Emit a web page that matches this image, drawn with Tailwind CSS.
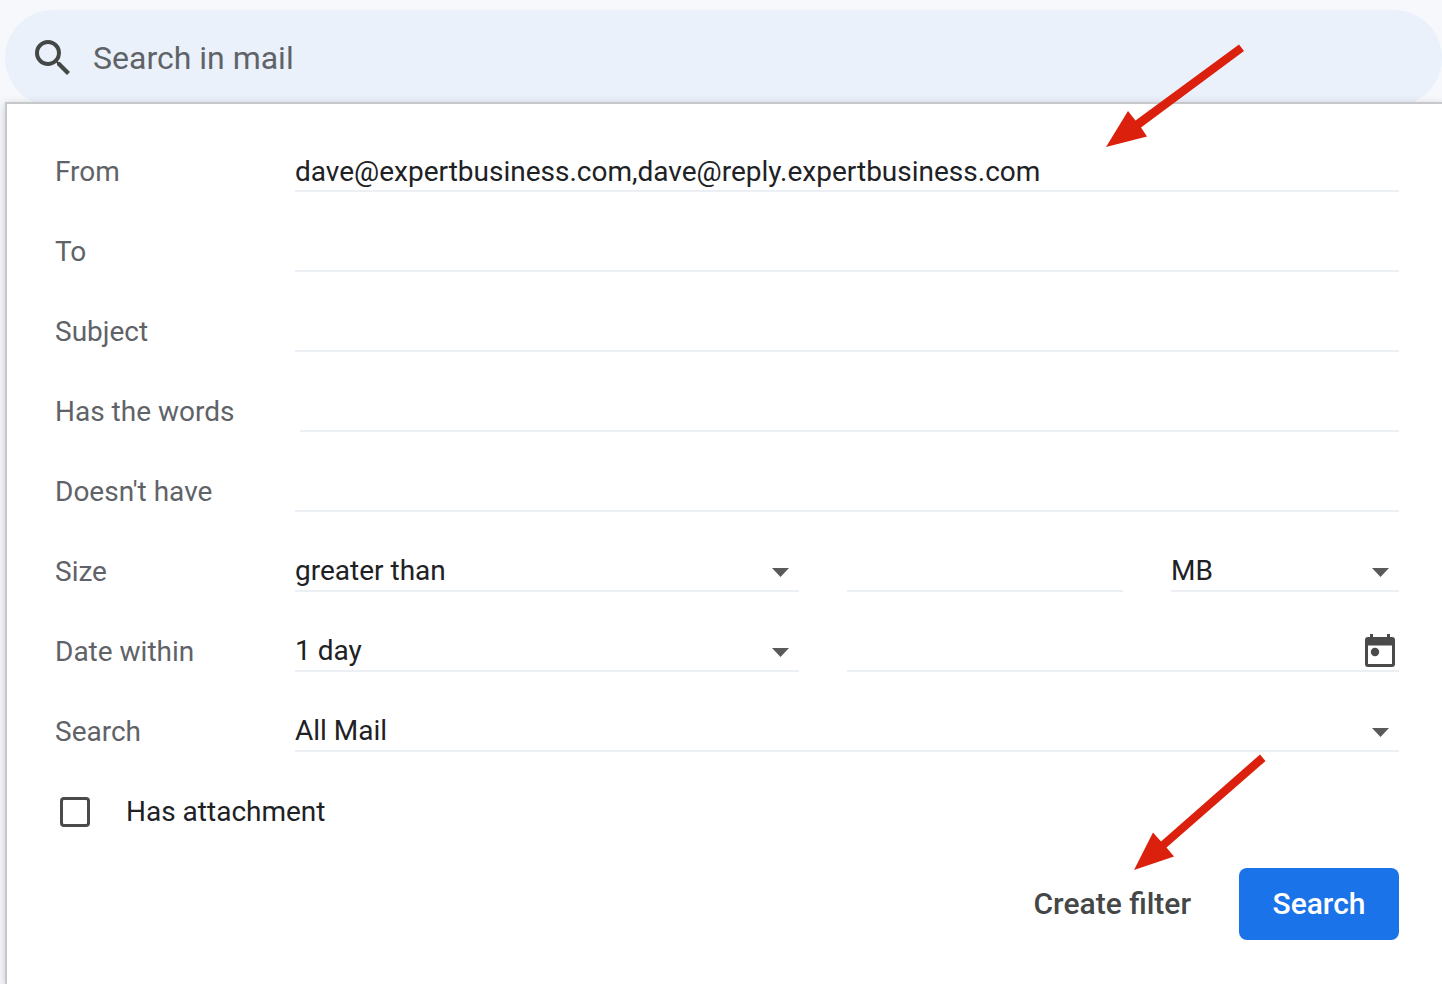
<!DOCTYPE html>
<html lang="en">
<head>
  <meta charset="UTF-8">
  <meta name="viewport" content="width=device-width, initial-scale=1.0">
  <title>Search in mail</title>
  <script src="https://cdn.jsdelivr.net/npm/@tailwindcss/browser@4"></script>
</head>
<body class="min-h-screen flex flex-col overflow-x-hidden bg-[#f6f8fc] pt-[10px] pl-[5px] font-['Roboto','Liberation_Sans',sans-serif] text-[28px] leading-10 text-[#202124]">

  <!-- Search bar -->
  <header class="-mb-1 h-24 flex items-center gap-4 rounded-full bg-[#eaf1fb] pl-6">
    <svg class="size-12 shrink-0 fill-[#444746]" viewBox="0 0 24 24" aria-hidden="true">
      <path d="M15.5 14h-.79l-.28-.27A6.471 6.471 0 0 0 16 9.500 6.500 6.500 0 1 0 9.500 16c1.610 0 3.090-.59 4.230-1.570l.27.28v.79l5 4.990L20.490 19l-4.990-5zm-6 0C7.010 14 5 11.990 5 9.500S7.010 5 9.500 5 14 7.010 14 9.500 11.990 14 9.500 14z"/>
    </svg>
    <input type="search" placeholder="Search in mail" aria-label="Search in mail" class="grow min-w-0 bg-transparent text-[32px] outline-none placeholder:text-[#5f6368]">
  </header>

  <!-- Advanced search panel -->
  <form class="relative grow border-t-2 border-l-2 border-[#c7c8ca] bg-white pt-2 pr-[43px] pb-11 pl-12 shadow-[0_2px_8px_rgba(60,64,67,0.25)]">
    <div class="h-20 flex items-end">
      <label for="from" class="w-60 h-10 shrink-0 text-[#5f6368]">From</label>
      <input id="from" type="text" value="dave@expertbusiness.com,dave@reply.expertbusiness.com" class="grow min-w-0 h-10 border-b-2 border-[#eceff3] pt-0.5 outline-none">
    </div>
    <div class="h-20 flex items-end">
      <label for="to" class="w-60 h-10 shrink-0 text-[#5f6368]">To</label>
      <input id="to" type="text" class="grow min-w-0 h-10 border-b-2 border-[#eceff3] pt-0.5 outline-none">
    </div>
    <div class="h-20 flex items-end">
      <label for="subject" class="w-60 h-10 shrink-0 text-[#5f6368]">Subject</label>
      <input id="subject" type="text" class="grow min-w-0 h-10 border-b-2 border-[#eceff3] pt-0.5 outline-none">
    </div>
    <div class="h-20 flex items-end">
      <label for="has-words" class="w-60 h-10 shrink-0 text-[#5f6368]">Has the words</label>
      <input id="has-words" type="text" class="ml-[5px] grow min-w-0 h-10 border-b-2 border-[#eceff3] pt-0.5 outline-none">
    </div>
    <div class="h-20 flex items-end">
      <label for="no-words" class="w-60 h-10 shrink-0 text-[#5f6368]">Doesn't have</label>
      <input id="no-words" type="text" class="grow min-w-0 h-10 border-b-2 border-[#eceff3] pt-0.5 outline-none">
    </div>

    <div class="h-20 flex items-end">
      <label for="size-op" class="w-60 h-10 shrink-0 text-[#5f6368]">Size</label>
      <div class="grow grid grid-cols-[42fr_23fr_19fr] gap-12">
        <div class="relative">
          <select id="size-op" class="block w-full h-10 appearance-none border-b-2 border-[#eceff3] leading-9 outline-none">
            <option>greater than</option>
            <option>less than</option>
          </select>
          <svg class="pointer-events-none absolute top-4 right-[10px] w-[17px] h-[9px] fill-[#5a5a5a]" viewBox="0 0 17 9"><path d="M0 0h17L8.500 9z"/></svg>
        </div>
        <input type="text" aria-label="Size value" class="min-w-0 h-10 border-b-2 border-[#eceff3] pt-0.5 outline-none">
        <div class="relative">
          <select aria-label="Size unit" class="block w-full h-10 appearance-none border-b-2 border-[#eceff3] leading-9 outline-none">
            <option>MB</option>
            <option>KB</option>
            <option>Bytes</option>
          </select>
          <svg class="pointer-events-none absolute top-4 right-[10px] w-[17px] h-[9px] fill-[#5a5a5a]" viewBox="0 0 17 9"><path d="M0 0h17L8.500 9z"/></svg>
        </div>
      </div>
    </div>

    <div class="h-20 flex items-end">
      <label for="within" class="w-60 h-10 shrink-0 text-[#5f6368]">Date within</label>
      <div class="grow grid grid-cols-[42fr_23fr_19fr] gap-12">
        <div class="relative">
          <select id="within" class="block w-full h-10 appearance-none border-b-2 border-[#eceff3] leading-9 outline-none">
            <option>1 day</option>
            <option>3 days</option>
            <option>1 week</option>
          </select>
          <svg class="pointer-events-none absolute top-4 right-[10px] w-[17px] h-[9px] fill-[#5a5a5a]" viewBox="0 0 17 9"><path d="M0 0h17L8.500 9z"/></svg>
        </div>
        <div class="col-span-2 flex items-start h-10 border-b-2 border-[#eceff3]">
          <input type="text" aria-label="Date" class="grow min-w-0 h-full outline-none">
          <button type="button" aria-label="Choose date" class="mt-0.5 mr-1 shrink-0">
            <svg class="w-[30px] h-[33px]" viewBox="0 0 30 33">
              <path fill="#4a4a4a" fill-rule="evenodd" d="M5 0h3v3h14V0h3v3h2a3 3 0 0 1 3 3v24a3 3 0 0 1-3 3H3a3 3 0 0 1-3-3V6a3 3 0 0 1 3-3h2zM3 11.500V30h24V11.500z"/>
              <circle cx="10" cy="18" r="4.200" fill="#4a4a4a"/>
            </svg>
          </button>
        </div>
      </div>
    </div>

    <div class="h-20 flex items-end">
      <label for="scope" class="w-60 h-10 shrink-0 text-[#5f6368]">Search</label>
      <div class="relative grow">
        <select id="scope" class="block w-full h-10 appearance-none border-b-2 border-[#eceff3] leading-9 outline-none">
          <option>All Mail</option>
          <option>Inbox</option>
          <option>Starred</option>
        </select>
        <svg class="pointer-events-none absolute top-4 right-[10px] w-[17px] h-[9px] fill-[#5a5a5a]" viewBox="0 0 17 9"><path d="M0 0h17L8.500 9z"/></svg>
      </div>
    </div>

    <div class="mt-5 h-20 flex items-center pl-[5px]">
      <input id="attachment" type="checkbox" class="size-[30px] appearance-none rounded-[4px] border-[3px] border-[#4a4a4a] checked:bg-[#4a4a4a]">
      <label for="attachment" class="pl-9">Has attachment</label>
    </div>

    <div class="mt-4 flex justify-end items-center gap-12 text-[30px] font-medium">
      <button type="button" class="h-[72px] text-[#444746]">Create filter</button>
      <button type="submit" class="w-40 h-[72px] rounded-lg bg-[#1a73e8] text-white">Search</button>
    </div>

    <!-- Arrows pointing at the From field and the Create filter button -->
    <svg class="pointer-events-none absolute -top-[60px] right-[198px] w-[138px] h-[103px] fill-[#db200e]" viewBox="0 0 138 103">
      <path d="M133 0.500L138 7L35 83.500L41 92.500L0 103L22 67L29.500 76.500z"/>
    </svg>
    <svg class="pointer-events-none absolute top-[650px] right-[176px] w-[132px] h-[116px] fill-[#db200e]" viewBox="0 0 132 116">
      <path d="M126 0.500L131.500 7L32.500 93.500L40 102.500L0 116L19 78.500L27 87.500z"/>
    </svg>
  </form>

</body>
</html>
